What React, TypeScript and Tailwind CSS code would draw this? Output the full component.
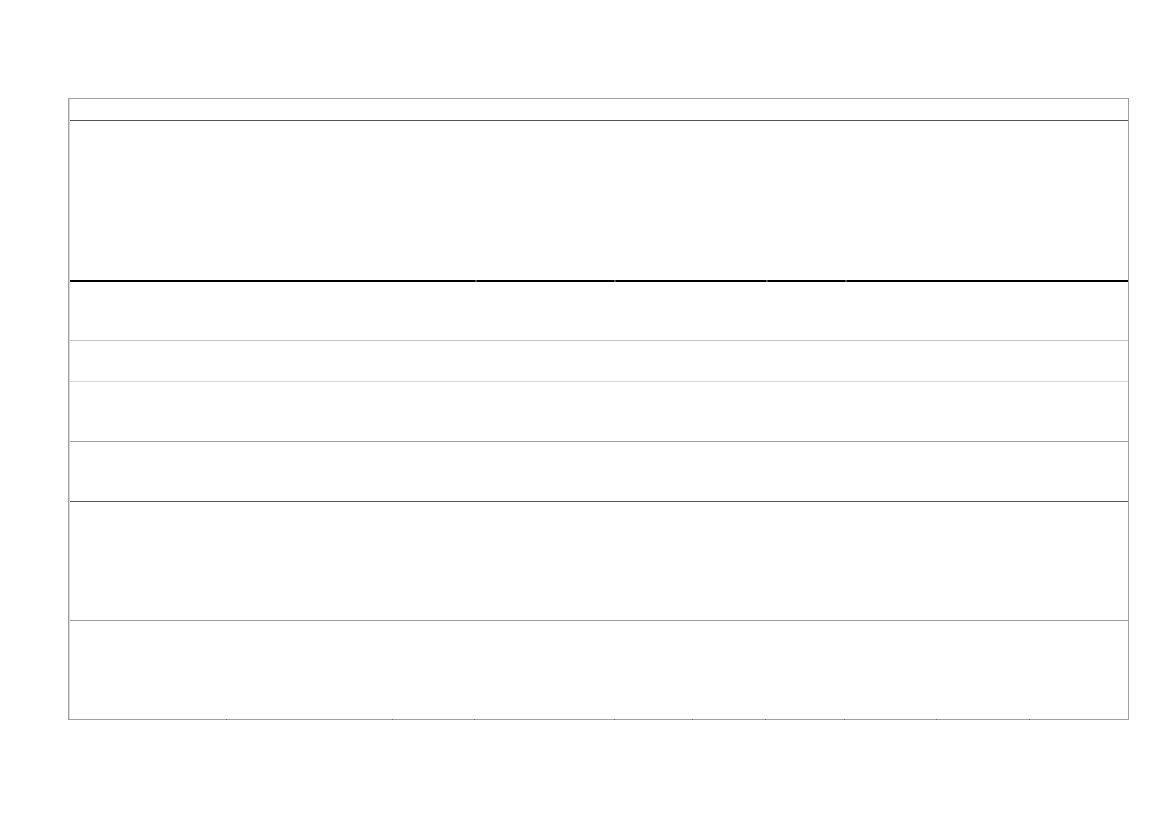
const thickParts = [405, 137, 150, 77, 281];
const bottomParts = [158, 165, 81, 139, 77, 72, 78, 91, 92, 99];

const rows = [
  { h: "h-[58px]", line: "h-px bg-[#c4c4c4]" },
  { h: "h-[40px]", line: "h-px bg-[#d8d8d8]" },
  { h: "h-[59px]", line: "h-px bg-[#a0a0a0]" },
  { h: "h-[59px]", line: "h-px bg-[#555555]" },
  { h: "h-[118px]", line: "h-px bg-[#a0a0a0]" },
];

export default function App() {
  return (
    <div className="min-h-[827px] bg-white pt-[98px] pl-[68px] font-['Liberation_Sans',sans-serif]">
      <div className="w-[1061px]">
        <div className="border-x border-t border-[#a0a0a0]">
          <div className="border-l border-[#d8d8d8]">
            {/* header */}
            <div className="h-[21px]" />
            <div className="h-px bg-[#555555]" />
            <div className="h-[159px]" />
            {/* thick rule */}
            <div className="flex h-[2px]">
              {thickParts.map((w, i) => (
                <div key={i} className="flex">
                  <div className="h-[2px] bg-black" style={{ width: w }} />
                  {i < thickParts.length - 1 && <div className="h-[2px] w-[2px] bg-[#4a4a4a]" />}
                </div>
              ))}
            </div>
            {rows.map((r, i) => (
              <div key={i}>
                <div className={r.h} />
                <div className={r.line} />
              </div>
            ))}
            <div className="h-[98px]" />
          </div>
        </div>
        {/* bottom edge with cell ticks */}
        <div className="flex h-px">
          {bottomParts.map((w, i) => (
            <div key={i} className="flex">
              <div className="h-px bg-[#a0a0a0]" style={{ width: w }} />
              {i < bottomParts.length - 1 && <div className="h-px w-px bg-[#6a6a6a]" />}
            </div>
          ))}
        </div>
      </div>
    </div>
  );
}
